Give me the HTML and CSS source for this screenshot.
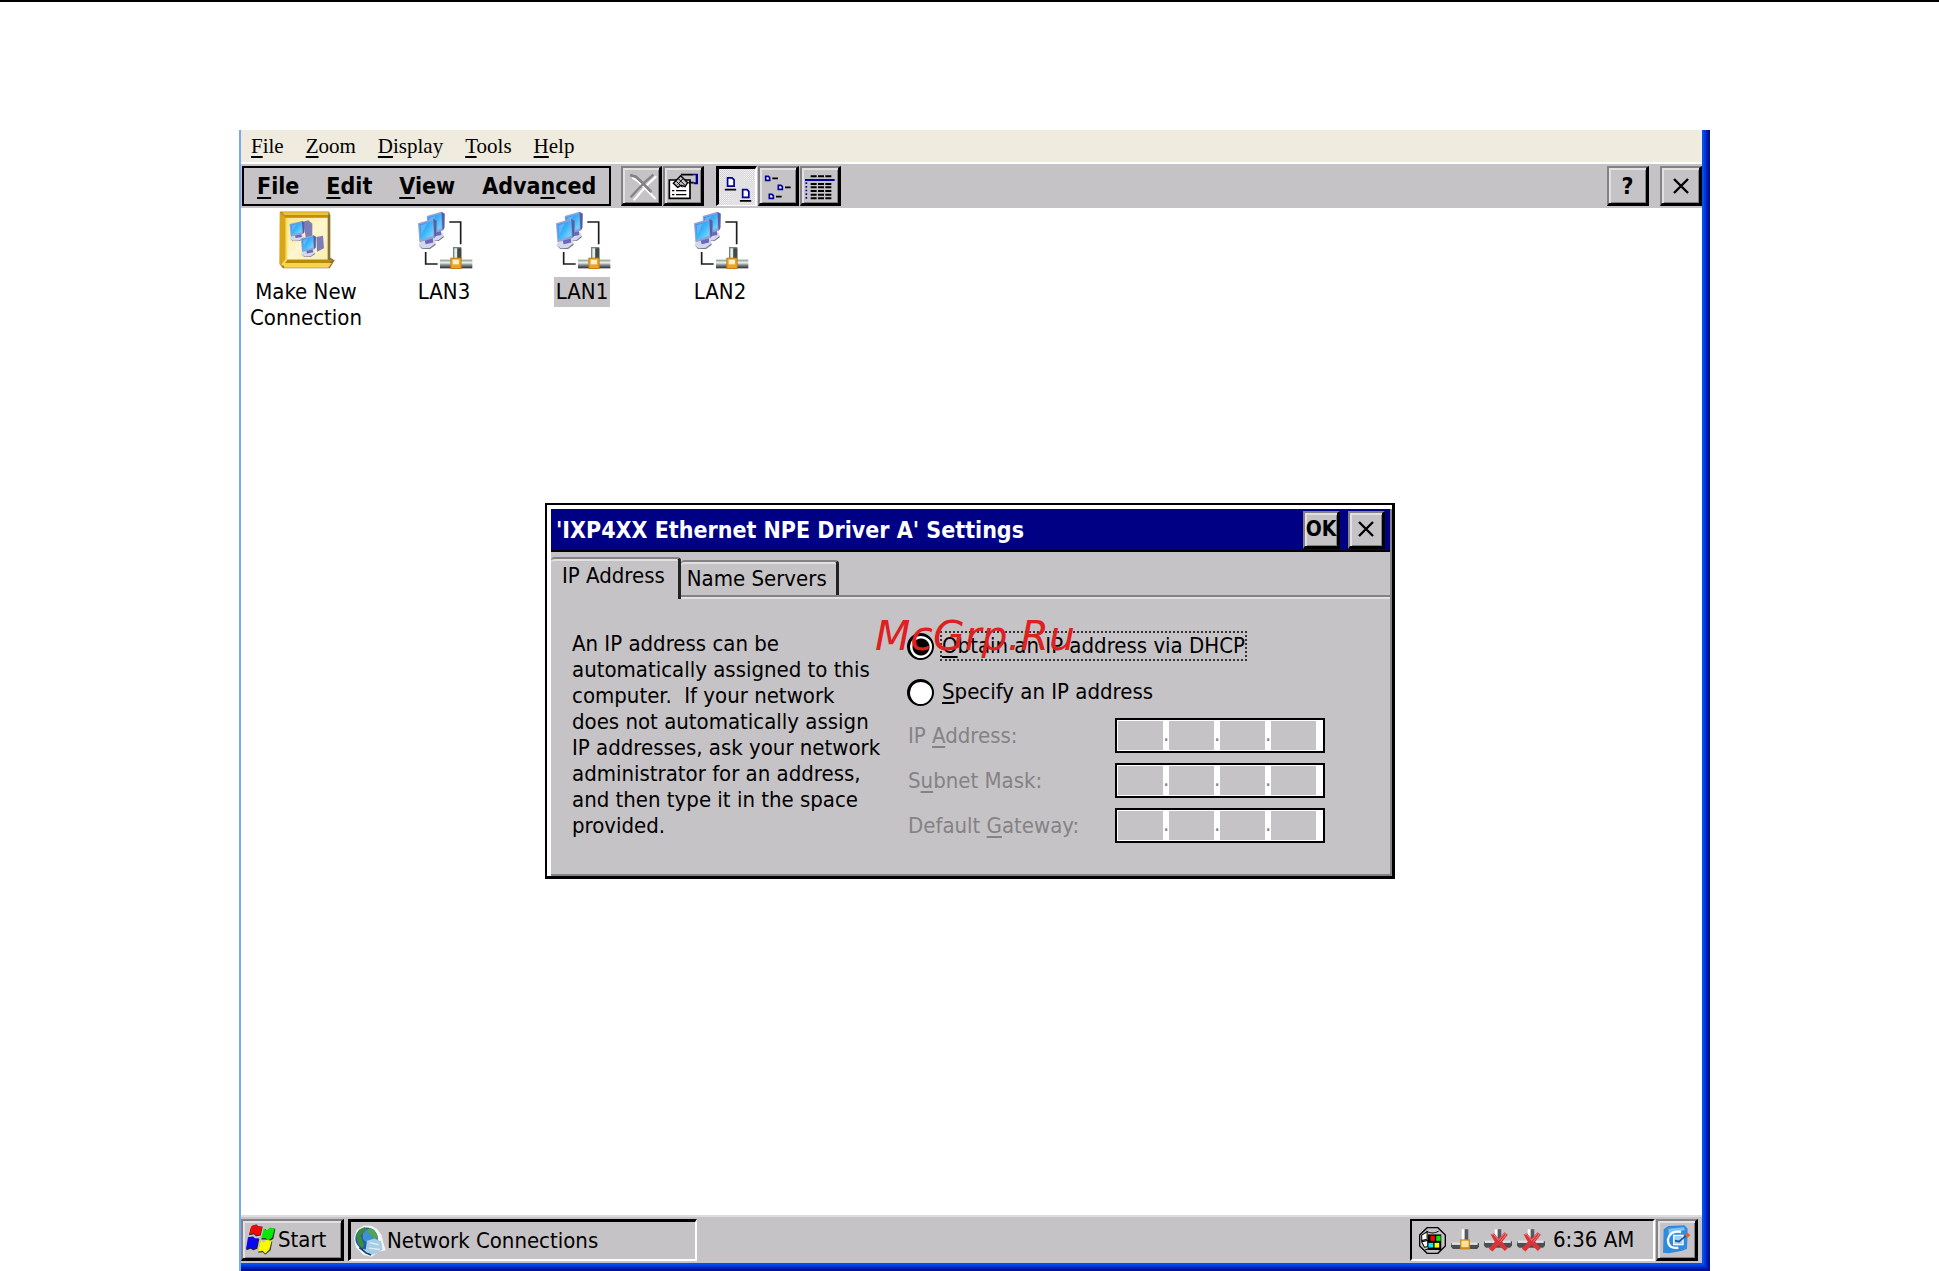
FILE: index.html
```
<!DOCTYPE html>
<html lang="en">
<head>
    <meta charset="UTF-8">
    <title>Network Connections</title>
    <link rel="stylesheet" href="styles.css">
</head>
<body>

<!-- shared drawings -->
<svg class="sprites" aria-hidden="true">
    <defs>
        <linearGradient id="screen" x1="0" y1="0" x2="1" y2="1">
            <stop offset="0" stop-color="#2f86e8"/>
            <stop offset="0.5" stop-color="#38b4fb"/>
            <stop offset="1" stop-color="#8fe2ff"/>
        </linearGradient>
        <linearGradient id="pipe" x1="0" y1="0" x2="0" y2="1">
            <stop offset="0" stop-color="#7d9a80"/>
            <stop offset="0.35" stop-color="#f0f2f0"/>
            <stop offset="0.6" stop-color="#8b9096"/>
            <stop offset="1" stop-color="#25282c"/>
        </linearGradient>
        <linearGradient id="page" x1="0" y1="0" x2="1" y2="1">
            <stop offset="0" stop-color="#fbe68a"/>
            <stop offset="0.5" stop-color="#fdf6cf"/>
            <stop offset="1" stop-color="#f8eeb0"/>
        </linearGradient>
        <pattern id="dots" width="6" height="6" patternUnits="userSpaceOnUse">
            <rect width="6" height="6" fill="#fff"/>
            <path d="M0 0h3v3h-3zM3 3h3v3h-3z" fill="#c6c3c6"/>
        </pattern>
    </defs>
    <symbol id="monitor" viewBox="0 0 60 76" preserveAspectRatio="none">
        <path d="M10 56L28 50L50 54L53 62L36 73L16 74L3 66Z" fill="#d5d7ea"/>
        <path d="M3 66L16 74L36 73L53 62V66L37 76H14Z" fill="#777b92"/>
        <path d="M20 48L44 44L46 60L24 64Z" fill="#6a67bc"/>
        <path d="M2 12L46 1L56 6L55 42L50 49L6 59Z" fill="#8fa4d4"/>
        <path d="M46 1L56 6L55 42L50 49Z" fill="#5360a6"/>
        <path d="M6 15L45 6L46 43L9 53Z" fill="url(#screen)"/>
        <path d="M9 17L28 12L12 40Z" fill="#77baf3" opacity=".7"/>
    </symbol>
    <symbol id="lan" viewBox="48 18 171 174">
        <path d="M148 51H182V118M77 141V177H113" fill="none" stroke="#1c1c1c" stroke-width="5"/>
        <use href="#monitor" x="78" y="19" width="60" height="90"/>
        <use href="#monitor" x="52" y="40" width="62" height="92"/>
        <rect x="159" y="126" width="25" height="36" fill="#6d8a70"/>
        <rect x="163" y="130" width="9" height="32" fill="#e9ecea"/>
        <rect x="172" y="130" width="12" height="32" fill="#43474b"/>
        <rect x="120" y="164" width="97" height="26" fill="url(#pipe)"/>
        <rect x="151" y="158" width="34" height="34" fill="#c67f12"/>
        <rect x="154" y="161" width="28" height="28" fill="#eba42a"/>
        <rect x="158" y="164" width="19" height="14" fill="#fff0c4"/>
    </symbol>
    <symbol id="plug" viewBox="0 0 86 72">
        <rect x="33" y="3" width="9" height="36" fill="#fff"/>
        <rect x="42" y="3" width="11" height="36" fill="#55585c"/>
        <path d="M0 45H86V57L80 64H6L0 57Z" fill="#4b4f53"/>
        <path d="M2 44H82V51H2Z" fill="#dfe3e4"/>
        <rect x="28" y="34" width="30" height="31" fill="#d08a1a"/>
        <rect x="32" y="38" width="22" height="20" fill="#ffe29a"/>
    </symbol>
    <symbol id="plug-off" viewBox="0 0 86 72">
        <rect x="33" y="3" width="9" height="36" fill="#fff"/>
        <rect x="42" y="3" width="11" height="36" fill="#55585c"/>
        <path d="M0 40H86V54L80 60H6L0 54Z" fill="#4b4f53"/>
        <path d="M2 38H82V45H2Z" fill="#dfe3e4"/>
        <path d="M20 18L31 16L45 32L63 12L73 20L56 41L73 61L64 70L45 51L26 71L15 63L33 41Z" fill="#d8343a"/>
        <path d="M22 20L30 19L45 37L63 16L68 20L50 41" fill="none" stroke="#f17a78" stroke-width="3"/>
    </symbol>
    <symbol id="cross" viewBox="0 0 16 16">
        <path d="M1 1L15 15M15 1L1 15" stroke="#000" stroke-width="2.4" fill="none"/>
    </symbol>
</svg>

<div class="window">
    <nav class="hostMenu">
        <button><u>F</u>ile</button>
        <button><u>Z</u>oom</button>
        <button><u>D</u>isplay</button>
        <button><u>T</u>ools</button>
        <button><u>H</u>elp</button>
    </nav>

    <header class="toolbar">
        <nav class="menu">
            <button><u>F</u>ile</button>
            <button><u>E</u>dit</button>
            <button><u>V</u>iew</button>
            <button>Adva<u>n</u>ced</button>
        </nav>
        <div class="tools">
            <button class="raised" aria-label="Delete">
                <svg viewBox="63 144 108 105">
                    <path d="M88 170L104 180L124 200L146 222L158 234M160 166L130 194L106 222L92 238" transform="translate(3 3)" stroke="#fff" stroke-width="6" fill="none"/>
                    <path d="M84 165L102 170L121 188L148 216" stroke="#848284" stroke-width="8" fill="none"/>
                    <path d="M154 164L128 187L106 210L86 232" stroke="#848284" stroke-width="7" fill="none"/>
                </svg>
            </button>
            <button class="raised" aria-label="Properties">
                <svg viewBox="188 144 108 105">
                    <path d="M200 179H216L222 172L238 161H272V187H262V235H200Z" fill="#c6c3c6"/>
                    <path d="M201 180H263V235H201Z" fill="#fff" stroke="#000" stroke-width="5"/>
                    <path d="M213 190L235 167L256 188L248 200L236 196L226 202Z" fill="#c6c3c6" stroke="#000" stroke-width="4"/>
                    <path d="M222 184L240 202M229 177L250 198M242 176L226 194" stroke="#000" stroke-width="3"/>
                    <path d="M236 164H274M258 188H274" stroke="#000" stroke-width="5"/>
                    <path d="M274 161H287V193H274V187H280V166H274Z" fill="#00008b"/>
                    <path d="M209 212H216M221 212H252M209 224H216M221 224H252" stroke="#000" stroke-width="4"/>
                </svg>
            </button>
        </div>
        <div class="tools">
            <button class="pressed" aria-label="Large icons">
                <svg viewBox="351 147 105 105">
                    <rect x="351" y="147" width="105" height="105" fill="url(#dots)"/>
                    <path d="M376 173H389L395 179V197H376ZM420 207H433L438 213V230H420Z" fill="#fff" stroke="#00009c" stroke-width="5"/>
                    <path d="M368 207H401M412 240H445" stroke="#000" stroke-width="5"/>
                </svg>
            </button>
            <button class="raised" aria-label="Small icons">
                <svg viewBox="474 144 108 105">
                    <path d="M491 169H499L503 173V181H491ZM529 196H537L541 200V208H529ZM502 223H510L514 227V235H502Z" fill="#fff" stroke="#00009c" stroke-width="5"/>
                    <path d="M511 175H528M549 202H566M522 230H539" stroke="#000" stroke-width="5"/>
                </svg>
            </button>
            <button class="raised" aria-label="Details">
                <svg viewBox="600 144 108 105">
                    <path d="M626 169H692M626 192H692M626 202H692M626 213H692M626 224H692M626 235H692" stroke="#000" stroke-width="6" stroke-dasharray="18 4"/>
                    <path d="M609 180H698" stroke="#00009c" stroke-width="6"/>
                    <path d="M613 187V240" stroke="#00009c" stroke-width="5" stroke-dasharray="5 6"/>
                </svg>
            </button>
        </div>
        <div class="windowButtons">
            <button class="raised">?</button>
            <button class="raised" aria-label="Close"><svg class="cross"><use href="#cross"/></svg></button>
        </div>
    </header>

    <main class="desktop">
        <ul class="connections">
            <li>
                <svg class="bigIcon" viewBox="147 18 171 174">
                    <path d="M153 20H300L304 30V158L317 166L302 190H162L152 178Z" fill="#8a7434"/>
                    <path d="M152 20L170 36V168L160 184L152 178Z" fill="#d9a616"/>
                    <path d="M152 20H300L296 38H172Z" fill="#c58d06"/>
                    <path d="M160 22H298V30H166Z" fill="#ecc33c"/>
                    <path d="M174 38H296V164H174Z" fill="url(#page)"/>
                    <path d="M174 164H312L300 174H164Z" fill="#b98a0a"/>
                    <path d="M160 174H308L298 188H166Z" fill="#f6d54c"/>
                    <path d="M172 38V164L160 180" stroke="#f8dc62" stroke-width="6" fill="none"/>
                    <path d="M222 50L238 46L250 56V96L232 108Z" fill="#7f7db8"/>
                    <path d="M262 96L282 92L285 130L264 140Z" fill="#7f7db8"/>
                    <use href="#monitor" x="180" y="47" width="50" height="62"/>
                    <use href="#monitor" x="214" y="90" width="50" height="66"/>
                </svg>
                <span>Make New Connection</span>
            </li>
            <li><svg class="bigIcon"><use href="#lan"/></svg><span>LAN3</span></li>
            <li class="selected"><svg class="bigIcon"><use href="#lan"/></svg><span>LAN1</span></li>
            <li><svg class="bigIcon"><use href="#lan"/></svg><span>LAN2</span></li>
        </ul>

        <section class="dialog">
            <div class="titleBar">
                <h1>'IXP4XX Ethernet NPE Driver A' Settings</h1>
                <button class="raised">OK</button>
                <button class="raised" aria-label="Close"><svg class="cross"><use href="#cross"/></svg></button>
            </div>
            <div class="tabs">
                <button class="tab active">IP Address</button>
                <button class="tab">Name Servers</button>
            </div>
            <form class="settings">
                <p>An IP address can be<br>
                automatically assigned to this<br>
                computer.&nbsp; If your network<br>
                does not automatically assign<br>
                IP addresses, ask your network<br>
                administrator for an address,<br>
                and then type it in the space<br>
                provided.</p>
                <div class="fields">
                    <div class="choice">
                        <input type="radio" name="mode" id="dhcp" checked>
                        <label for="dhcp" class="focused"><u>O</u>btain an IP address via DHCP</label>
                    </div>
                    <div class="choice">
                        <input type="radio" name="mode" id="static">
                        <label for="static"><u>S</u>pecify an IP address</label>
                    </div>
                    <div class="address">
                        <label for="ip">IP <u>A</u>ddress:</label>
                        <div class="octets">
                            <input type="text" id="ip" disabled><i>.</i><input type="text" aria-label="IP address 2" disabled><i>.</i><input type="text" aria-label="IP address 3" disabled><i>.</i><input type="text" aria-label="IP address 4" disabled>
                        </div>
                    </div>
                    <div class="address">
                        <label for="mask">S<u>u</u>bnet Mask:</label>
                        <div class="octets">
                            <input type="text" id="mask" disabled><i>.</i><input type="text" aria-label="Subnet mask 2" disabled><i>.</i><input type="text" aria-label="Subnet mask 3" disabled><i>.</i><input type="text" aria-label="Subnet mask 4" disabled>
                        </div>
                    </div>
                    <div class="address">
                        <label for="gateway">Default <u>G</u>ateway:</label>
                        <div class="octets">
                            <input type="text" id="gateway" disabled><i>.</i><input type="text" aria-label="Gateway 2" disabled><i>.</i><input type="text" aria-label="Gateway 3" disabled><i>.</i><input type="text" aria-label="Gateway 4" disabled>
                        </div>
                    </div>
                </div>
            </form>
            <div class="watermark">McGrp.Ru</div>
        </section>
    </main>

    <footer class="taskbar">
        <button class="raised start">
            <svg viewBox="45 72 93 92">
                <path d="M68 76L80 73L84 78L98 80L92 106L78 108L72 102L57 105L62 84Z" fill="#222"/>
                <path d="M64 78L78 73L84 79L97 80L90 104L78 105L72 99L58 102Z" fill="#f00808"/>
                <path d="M104 86L112 92L122 84L136 86L130 116L116 125L108 118L94 118Z" fill="#222"/>
                <path d="M101 85L110 90L120 82L134 85L127 112L114 121L107 114L94 114Z" fill="#08e808"/>
                <path d="M56 112L70 110L76 116L88 116L82 146L70 150L62 146L49 150Z" fill="#222"/>
                <path d="M54 111L68 109L74 115L86 114L79 142L68 147L62 142L48 147Z" fill="#0808f0"/>
                <path d="M92 122L104 128L112 122L127 124L122 150L106 164L98 156L84 158Z" fill="#444"/>
                <path d="M92 120L102 126L110 119L125 122L118 148L106 160L98 152L84 154Z" fill="#f8f808"/>
            </svg>
            Start
        </button>
        <button class="pressed task">
            <svg viewBox="374 80 94 94">
                <path d="M402 82L424 82L442 92L455 110L460 132L467 154L448 158L426 173L402 168L380 146L374 120L382 94Z" fill="#f4f6f8"/>
                <circle cx="411" cy="120" r="33" fill="#1c5fa8"/>
                <circle cx="419" cy="112" r="20" fill="#3f8fd4"/>
                <path d="M381 112L388 95L405 86L411 92L404 103L393 110L398 124L404 138L398 148L386 136Z" fill="#3c8a3e"/>
                <path d="M420 88L434 96L444 114L440 122L428 116L420 104L412 100Z" fill="#54a552"/>
                <path d="M412 126L434 120L454 128L458 152L440 164L424 168L408 156Z" fill="#a6cde6"/>
                <path d="M420 132L446 138M418 148L450 152" stroke="#dcecf6" stroke-width="4"/>
                <path d="M390 146L410 162L424 168" stroke="#1a4270" stroke-width="5" fill="none"/>
            </svg>
            Network Connections
        </button>
        <div class="tray">
            <svg class="trayGlobe" viewBox="0 0 80 80">
                <path d="M24 2H56L78 24V56L56 78H24L2 56V24Z" fill="#c6c3c6" stroke="#000" stroke-width="4"/>
                <path d="M8 24L24 14V36L8 40ZM8 44L26 40V58L16 60Z" fill="#fff" stroke="#000" stroke-width="3"/>
                <path d="M26 22H66V68H26Z" fill="#000"/>
                <path d="M34 26H47V41H34Z" fill="#f00"/>
                <path d="M51 26H64V41H51Z" fill="#0e0"/>
                <path d="M28 47H42V61H28Z" fill="#0ee"/>
                <path d="M46 47H60V61H46Z" fill="#ff0"/>
                <path d="M22 12Q40 24 58 12M18 68Q40 58 62 68" stroke="#000" stroke-width="3" fill="none"/>
            </svg>
            <svg class="plug"><use href="#plug"/></svg>
            <svg class="plug"><use href="#plug-off"/></svg>
            <svg class="plug"><use href="#plug-off"/></svg>
            <time>6:36 AM</time>
        </div>
        <button class="raised showDesktop" aria-label="Desktop">
            <svg viewBox="810 70 96 96">
                <path d="M818 86L832 76L880 74L890 84L888 144L874 150L834 158L816 156Z" fill="#2d8ce0"/>
                <path d="M832 84L878 80L882 88L846 96L834 110Z" fill="#7cc4f5"/>
                <path d="M870 94Q838 88 831 116Q830 146 862 141" fill="none" stroke="#fff" stroke-width="7"/>
                <path d="M848 104H876V132H848Z" fill="#9fd2f7" stroke="#fff" stroke-width="4"/>
                <path d="M852 120L864 123L886 104" fill="none" stroke="#1d4f96" stroke-width="5"/>
                <path d="M880 100L890 96L898 104L888 112Z" fill="#dd5c3a"/>
            </svg>
        </button>
    </footer>
</div>

</body>
</html>
```

FILE: styles.css
```
* {
    box-sizing: border-box;
}

body {
    margin: 0;
    height: 100vh;
    padding: 128px 229px 0 239px;
    border-top: 2px solid #000;
    background: #fff;
    color: #000;
    font-family: "DejaVu Sans Condensed", "DejaVu Sans", sans-serif;
    font-size: 22px;
    line-height: 26px;
    overflow: hidden;
}

button {
    margin: 0;
    padding: 0;
    border: 0;
    background: none;
    color: inherit;
    font: inherit;
    white-space: nowrap;
}

svg {
    display: block;
    flex: none;
}

u {
    text-decoration-thickness: 2px;
    text-underline-offset: 3px;
}

.sprites {
    position: absolute;
    width: 0;
    height: 0;
}

.window {
    height: 100%;
    display: flex;
    flex-direction: column;
    border-left: 2px solid #7ba6f0;
    padding: 0 8px 8px 0;
    background: #0050ee;
    box-shadow: inset -2px -2px #00118a, inset -4px -4px #001fb4, inset -6px -6px #0038dc;
}

/* raised and sunken frames */
.raised {
    display: flex;
    align-items: center;
    justify-content: center;
    border: solid #848284;
    border-width: 2px 3px 3px 2px;
    border-right-color: #000;
    border-bottom-color: #000;
    background: #c6c3c6;
    box-shadow: inset 2px 2px #e2e0e2, inset -1px -1px #848284;
}

.pressed {
    display: flex;
    align-items: center;
    border: solid #000;
    border-width: 3px 2px 2px 3px;
    border-right-color: #fff;
    border-bottom-color: #fff;
    background: #c6c3c6;
}

.cross {
    width: 16px;
    height: 16px;
}

.hostMenu {
    display: flex;
    gap: 22px;
    height: 32px;
    padding-left: 10px;
    background: #efebde;
    font-family: "Liberation Serif", serif;
    font-size: 21px;
}

.toolbar {
    display: flex;
    align-items: center;
    height: 46px;
    padding-left: 1px;
    border-top: 2px solid #fff;
    background: #c6c3c6;
    font-size: 23px;
    font-weight: bold;
}

.menu {
    display: flex;
    gap: 27px;
    height: 40px;
    margin-right: 10px;
    padding: 0 13px;
    border: 2px solid #000;
}

.tools {
    display: flex;
    gap: 1px;
    margin-right: 12px;
}

.tools button {
    width: 41px;
    height: 40px;
}

.windowButtons {
    display: flex;
    gap: 11px;
    margin-left: auto;
}

.windowButtons button {
    width: 42px;
    height: 40px;
}

.desktop {
    position: relative;
    flex: 1;
    background: #fff;
}

.connections {
    display: flex;
    gap: 14px;
    margin: 0;
    padding: 3px;
    list-style: none;
}

.connections li {
    display: flex;
    flex-direction: column;
    align-items: center;
    gap: 8px;
    width: 124px;
    text-align: center;
}

.connections span {
    padding: 2px;
}

.selected span {
    background: #c6c3c6;
}

.bigIcon {
    width: 57px;
    height: 58px;
}

.dialog {
    position: absolute;
    left: 304px;
    top: 295px;
    width: 850px;
    border: solid #000;
    border-width: 2px 3px 3px 2px;
    background: #c6c3c6;
    box-shadow: inset 4px 4px #fff, inset -2px -2px #848284;
    padding: 4px 2px 2px 4px;
}

.titleBar {
    display: flex;
    align-items: center;
    gap: 8px;
    height: 43px;
    padding: 0 5px;
    border-bottom: 2px solid #000;
    background: #000084;
    color: #fff;
}

.titleBar h1 {
    flex: 1;
    margin: 0;
    font-size: 23px;
    white-space: nowrap;
}

.titleBar button {
    width: 37px;
    height: 38px;
    color: #000;
    font-size: 21px;
    font-weight: bold;
}

.tabs {
    display: flex;
    align-items: flex-end;
    height: 45px;
    border-bottom: 2px solid #848284;
    box-shadow: 0 2px #e2e0e2;
}

.tab {
    height: 35px;
    padding: 0 9px 0 6px;
    border: solid #848284;
    border-width: 2px 3px 0 0;
    border-right-color: #222;
    border-radius: 4px 4px 0 0;
    background: #c6c3c6;
    box-shadow: inset 0 2px #e2e0e2;
}

.active {
    height: 42px;
    margin-bottom: -4px;
    padding: 0 13px 6px 11px;
}

.settings {
    display: flex;
    padding: 33px 22px 31px 21px;
}

.settings p {
    width: 335px;
    margin: 0;
    padding-top: 1px;
    white-space: nowrap;
}

.fields {
    display: flex;
    flex-direction: column;
    gap: 10px;
}

.choice {
    display: flex;
    align-items: center;
    gap: 6px;
    height: 32px;
}

.choice:first-child {
    margin-bottom: 4px;
}

.choice label {
    border: 2px dotted transparent;
    white-space: nowrap;
}

.choice .focused {
    border-color: #333;
}

.choice input {
    appearance: none;
    width: 27px;
    height: 27px;
    margin: 0;
    border: 3px solid #000;
    border-right-width: 2px;
    border-bottom-width: 2px;
    border-radius: 50%;
    background: #fff;
}

.choice input:checked {
    background: radial-gradient(circle, #000 8px, #fff 9px);
}

.address {
    display: flex;
    align-items: center;
    padding-left: 1px;
    color: #848284;
}

.address label {
    width: 207px;
}

.octets {
    display: flex;
    width: 210px;
    height: 35px;
    padding: 1px;
    border: 2px solid #000;
    background: #fff;
}

.octets input {
    width: 45px;
    height: 29px;
    margin: 0;
    padding: 0;
    border: 0;
    background: #c6c3c6;
}

.octets i {
    width: 6px;
    font-style: normal;
    text-align: center;
}

.watermark {
    position: absolute;
    left: 328px;
    top: 108px;
    color: #de2021;
    font-family: "DejaVu Sans", sans-serif;
    font-size: 41px;
    font-style: italic;
    line-height: 46px;
    pointer-events: none;
}

.taskbar {
    display: flex;
    align-items: center;
    height: 48px;
    padding-right: 4px;
    border-top: 2px solid #dedcde;
    background: #c6c3c6;
}

.taskbar button,
.tray {
    height: 42px;
}

.taskbar .start {
    justify-content: flex-start;
    gap: 2px;
    width: 103px;
    margin-right: 4px;
    padding-left: 2px;
}

.start svg {
    width: 31px;
    height: 31px;
}

.task {
    width: 349px;
    padding-left: 3px;
    gap: 1px;
}

.task svg {
    width: 32px;
    height: 32px;
}

.tray {
    display: flex;
    align-items: center;
    gap: 5px;
    width: 245px;
    margin-left: auto;
    margin-right: 1px;
    padding-left: 7px;
    border: 2px solid #000;
    border-right-color: #fff;
    border-bottom-color: #fff;
}

.trayGlobe {
    width: 27px;
    height: 27px;
}

.plug {
    width: 28px;
    height: 24px;
}

.tray time {
    margin-left: 3px;
    white-space: nowrap;
}

.showDesktop {
    width: 42px;
}

.showDesktop svg {
    width: 32px;
    height: 32px;
}
```
